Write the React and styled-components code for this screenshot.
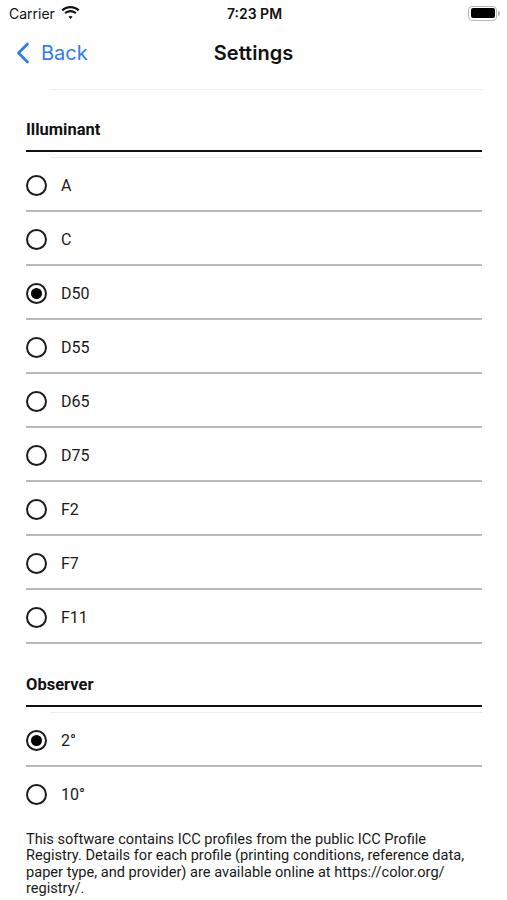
import React, { useState } from "react";
import styled, { createGlobalStyle } from "styled-components";

const GlobalStyle = createGlobalStyle`
  html, body {
    margin: 0;
    padding: 0;
    background: #fff;
  }
  body {
    font-family: Roboto, "Noto Sans", sans-serif;
    color: #111;
  }
`;

const Screen = styled.div`
  width: 507px;
  min-height: 900px;
  display: flex;
  flex-direction: column;
  background: #fff;
`;

const StatusBar = styled.div`
  height: 26px;
  display: grid;
  grid-template-columns: 1fr auto 1fr;
  align-items: center;
  padding: 0 7px 0 9px;
  font-family: Inter, "Noto Sans", sans-serif;
  font-size: 14px;
  color: #111;
`;

const Carrier = styled.div`
  display: flex;
  align-items: center;
  gap: 6px;
`;

const Clock = styled.div`
  font-weight: 600;
`;

const Battery = styled.div`
  justify-self: end;
  display: flex;
  align-items: center;
`;

const BatteryBody = styled.div`
  width: 24px;
  height: 10px;
  border: 1.5px solid #b8b8b8;
  border-radius: 4px;
  padding: 1.5px;
  display: flex;
`;

const BatteryFill = styled.div`
  flex: 1;
  background: #000;
  border-radius: 2px;
`;

const BatteryNub = styled.div`
  width: 2px;
  height: 5px;
  margin-left: 1px;
  background: #b8b8b8;
  border-radius: 0 2px 2px 0;
`;

const NavBar = styled.div`
  height: 54px;
  display: grid;
  grid-template-columns: 1fr auto 1fr;
  align-items: center;
  font-family: Inter, "Noto Sans", sans-serif;
  padding-bottom: 9px;
`;

const BackButton = styled.button`
  display: flex;
  align-items: center;
  gap: 11px;
  padding: 0 0 0 16px;
  border: none;
  background: transparent;
  color: #2f7cf6;
  font-family: inherit;
  font-size: 20px;
  cursor: pointer;
`;

const Title = styled.div`
  font-size: 20px;
  font-weight: 600;
  color: #111;
`;

const HairLine = styled.div`
  height: 1px;
  background: #ececec;
  margin: 0 25px 0 50px;
`;

const Content = styled.div`
  padding: 0 25px 0 26px;
  display: flex;
  flex-direction: column;
`;

const Section = styled.section`
  margin-top: ${(p) => p.$top}px;
  display: flex;
  flex-direction: column;
`;

const SectionTitle = styled.h2`
  margin: 0;
  font-size: 16.5px;
  line-height: 20px;
  font-weight: 700;
  padding-bottom: 10px;
  border-bottom: 2.5px solid #111;
`;

const Inset = styled.div`
  height: 1px;
  background: #ededed;
  margin: 5px 0 0 24px;
`;

const Row = styled.label`
  height: ${(p) => (p.$last ? 52 : 54)}px;
  box-sizing: border-box;
  padding-top: 3px;
  display: flex;
  align-items: center;
  gap: 14px;
  border-bottom: ${(p) => (p.$last ? "none" : "2px solid #b9b9b9")};
  font-size: 16px;
  color: #1a1a1a;
  cursor: pointer;
`;

const Radio = styled.span`
  width: 21px;
  height: 21px;
  box-sizing: border-box;
  border: 2px solid #1c1c1c;
  border-radius: 50%;
  display: flex;
  align-items: center;
  justify-content: center;

  &::after {
    content: "";
    width: 11px;
    height: 11px;
    border-radius: 50%;
    background: #000;
    display: ${(p) => (p.$on ? "block" : "none")};
  }
`;

const Footer = styled.p`
  margin: 12px 0 0;
  font-size: 14.6px;
  line-height: 16.3px;
  color: #1a1a1a;
`;

const illuminants = ["A", "C", "D50", "D55", "D65", "D75", "F2", "F7", "F11"];
const observers = ["2°", "10°"];

const Wifi = () => (
  <svg width="19" height="14" viewBox="0 0 19 14">
    <path d="M9.5 2.2c2.9 0 5.5 1.1 7.5 3l1.5-1.6C16.1 1.3 12.9 0 9.5 0S2.9 1.3.5 3.6L2 5.2c2-1.9 4.6-3 7.5-3z" fill="#111" />
    <path d="M9.5 6.2c1.8 0 3.4.7 4.6 1.8l1.5-1.6C14 4.9 11.9 4 9.5 4S5 4.9 3.4 6.4L4.9 8c1.2-1.1 2.8-1.8 4.6-1.8z" fill="#111" />
    <path d="M9.5 9.9c.8 0 1.5.3 2 .8l-2 2.3-2-2.3c.5-.5 1.2-.8 2-.8z" fill="#111" />
  </svg>
);

const Chevron = () => (
  <svg width="14" height="22" viewBox="0 0 14 22">
    <path d="M11.5 2 2.5 11l9 9" fill="none" stroke="#2f7cf6" strokeWidth="2.8" strokeLinecap="round" strokeLinejoin="round" />
  </svg>
);

const App = () => {
  const [illuminant, setIlluminant] = useState("D50");
  const [observer, setObserver] = useState("2°");

  return (
    <>
      <GlobalStyle />
      <Screen>
        <StatusBar>
          <Carrier>
            Carrier
            <Wifi />
          </Carrier>
          <Clock>7:23 PM</Clock>
          <Battery>
            <BatteryBody>
              <BatteryFill />
            </BatteryBody>
            <BatteryNub />
          </Battery>
        </StatusBar>
        <NavBar>
          <BackButton>
            <Chevron />
            Back
          </BackButton>
          <Title>Settings</Title>
          <div />
        </NavBar>
        <HairLine />
        <Content>
          <Section $top={30}>
            <SectionTitle>Illuminant</SectionTitle>
            <Inset />
            {illuminants.map((name) => (
              <Row key={name} onClick={() => setIlluminant(name)}>
                <Radio $on={illuminant === name} />
                {name}
              </Row>
            ))}
          </Section>
          <Section $top={31}>
            <SectionTitle>Observer</SectionTitle>
            <Inset />
            {observers.map((name, i) => (
              <Row
                key={name}
                $last={i === observers.length - 1}
                onClick={() => setObserver(name)}
              >
                <Radio $on={observer === name} />
                {name}
              </Row>
            ))}
          </Section>
          <Footer>
            This software contains ICC profiles from the public ICC Profile
            Registry. Details for each profile (printing conditions, reference
            data, paper type, and provider) are available online at
            https://color.org/<wbr />registry/.
          </Footer>
        </Content>
      </Screen>
    </>
  );
};

export default App;
